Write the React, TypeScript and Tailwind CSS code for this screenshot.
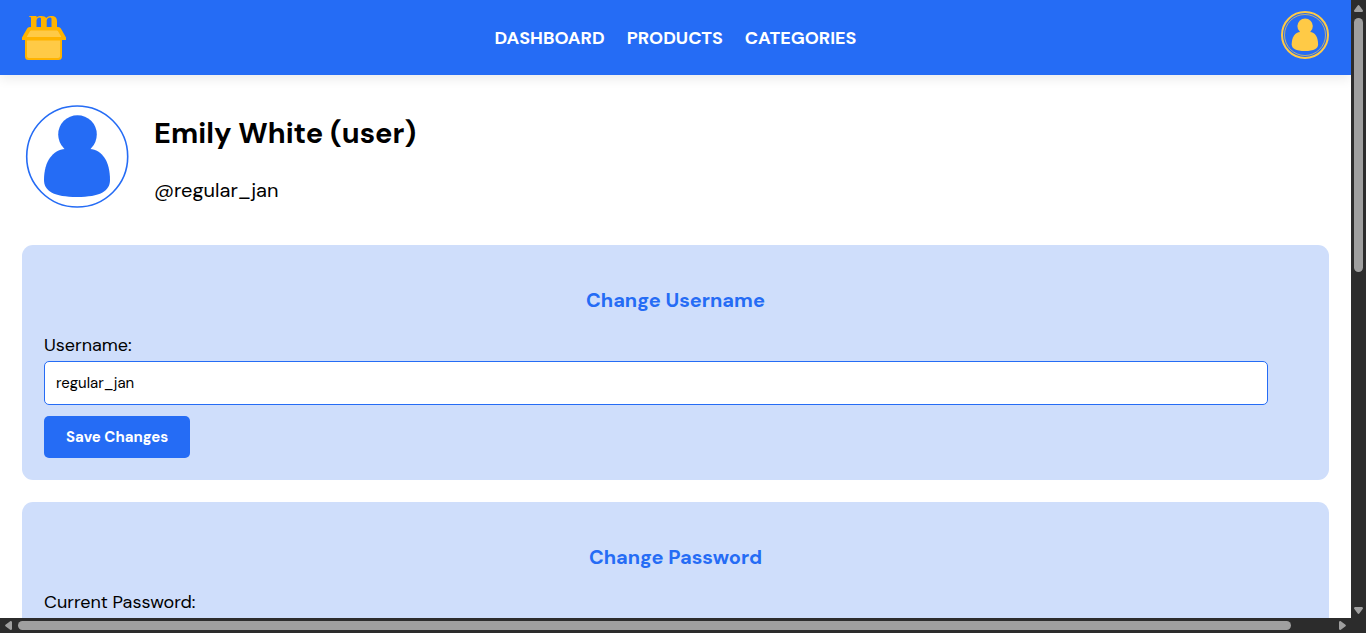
import type { ReactNode } from "react";

const navItems = ["DASHBOARD", "PRODUCTS", "CATEGORIES"];

function Logo() {
  return (
    <svg viewBox="0 0 44 45" className="h-[45px] w-11" aria-hidden="true">
      <g fill="#ffb300">
        <path d="M7 1h7.500v1.500C15.800 1.400 17.300 1 19.300 1c2.600 0 4.300.7 5 2C25.600 1.600 27.300 1 29.600 1 33 1 35 2.900 35 6.200V13h-5.500V4c0-1-.5-1.500-1.500-1.500-1.600 0-3 1.200-3.300 3V13H19V4c0-1-.4-1.500-1.400-1.500-1.500 0-2.800 1.200-3.100 3V13H9V3.200C9 2.200 8.300 1.800 7 1.800z" />
        <path d="M8 12h28c1.600 0 2.500.8 3.300 2.200L44 22.500V25h-4v16.500c0 2.400-1.300 3.500-3.500 3.500h-30C4.300 45 3 43.900 3 41.500V25H0v-2.500l4.700-8.300C5.500 12.800 6.400 12 8 12z" />
      </g>
      <path fill="#ffca46" d="M10 15.500h24c1.200 0 1.900.4 2.500 1.400l2.800 5H4.700l2.800-5c.6-1 1.300-1.400 2.500-1.400zM5 25.500h33V41c0 1.300-.7 2-2 2H7c-1.300 0-2-.7-2-2z" />
    </svg>
  );
}

function Person() {
  return (
    <>
      <circle cx="55.500" cy="33.500" r="19.300" />
      <path d="M43 48h25c12 1 20 12 20 31 0 11-10 17-33 17s-33-6-33-17c0-19 9-30 21-31z" />
    </>
  );
}

function Card({ title, children }: { title: string; children: ReactNode }) {
  return (
    <section className="rounded-[11px] bg-[#cfdefb] p-[22px]">
      <h2 className="mt-[18px] mb-[17px] text-center text-xl leading-[30px] font-bold text-[#256cf5]">{title}</h2>
      <form className="flex flex-col items-start" onSubmit={(e) => e.preventDefault()}>
        {children}
      </form>
    </section>
  );
}

const labelClass = "text-lg leading-[26px]";
const inputClass =
  "mt-[3px] mb-[11px] box-content h-[42px] w-[95%] rounded-[5px] border border-[#256cf5] bg-white px-[11px] text-[15px] outline-none";

export default function App() {
  return (
    <div className="grid h-screen grid-cols-[minmax(0,1fr)_15px] grid-rows-[minmax(0,1fr)_15px] bg-[#2c2c2c] font-['DM_Sans',Inter,sans-serif] text-black">
      <div className="overflow-hidden bg-white">
        <header className="grid h-[75px] grid-cols-[1fr_auto_1fr] items-center bg-[#256cf5] px-[22px] shadow-[0_4px_11px_rgba(0,0,0,0.08)]">
          <a href="#home" aria-label="Home" className="justify-self-start">
            <Logo />
          </a>
          <nav className="flex gap-[22px] text-lg leading-6 font-bold text-white">
            {navItems.map((item) => (
              <a key={item} href={"#" + item.toLowerCase()}>
                {item}
              </a>
            ))}
          </nav>
          <a href="#profile" aria-label="Profile" className="mb-[5px] justify-self-end">
            <svg viewBox="0 0 48 48" className="size-12" aria-hidden="true">
              <circle cx="24" cy="24" r="23" fill="none" stroke="#ffca46" strokeWidth="2" />
              <circle cx="24" cy="24" r="20.500" fill="none" stroke="#ffca46" strokeWidth="0.700" />
              <g fill="#ffca46" transform="translate(1.900 1.700) scale(0.400)">
                <Person />
              </g>
            </svg>
          </a>
        </header>
        <main className="flex flex-col gap-[22px] px-[22px] pt-[26px]">
          <div className="flex gap-[22px] pb-3">
            <svg viewBox="0 0 110 110" className="size-[110px]" aria-hidden="true">
              <circle cx="55.200" cy="55.500" r="50.500" fill="none" stroke="#256cf5" strokeWidth="1.600" />
              <g fill="#256cf5">
                <Person />
              </g>
            </svg>
            <div className="flex flex-col gap-[22px] pt-3">
              <h1 className="text-[29px] leading-10 font-bold">Emily White (user)</h1>
              <p className="text-xl leading-[30px]">@regular_jan</p>
            </div>
          </div>
          <Card title="Change Username">
            <label htmlFor="username" className={labelClass}>Username:</label>
            <input id="username" defaultValue="regular_jan" className={inputClass} />
            <button type="submit" className="h-[42px] rounded-[5px] bg-[#256cf5] px-[22px] text-[15px] font-bold text-white">
              Save Changes
            </button>
          </Card>
          <Card title="Change Password">
            <label htmlFor="current-password" className={labelClass}>Current Password:</label>
            <input id="current-password" type="password" className={inputClass} />
          </Card>
        </main>
      </div>
      <div className="flex flex-col items-center pt-[5px] pb-1" aria-hidden="true">
        <svg viewBox="0 0 9 7" className="h-[7px] w-[9px] fill-[#9f9f9f]"><path d="M3.500.8q1-1.400 2 0L9 5.500Q9 7 8 7H1Q0 7 0 5.500z" /></svg>
        <div className="mt-1.5 mb-1.5 min-h-0 w-full grow px-[3px]">
          <div className="h-[43.5%] rounded-full bg-[#9f9f9f]" />
        </div>
        <svg viewBox="0 0 9 7" className="h-[7px] w-[9px] fill-[#9f9f9f]"><path d="M3.500 6.200q1 1.400 2 0L9 1.500Q9 0 8 0H1Q0 0 0 1.500z" /></svg>
      </div>
      <div className="flex items-center px-[5px]" aria-hidden="true">
        <svg viewBox="0 0 7 9" className="h-[9px] w-[7px] fill-[#9f9f9f]"><path d="M.8 3.500q-1.400 1 0 2L5.500 9Q7 9 7 8V1Q7 0 5.500 0z" /></svg>
        <div className="mx-1.5 grow">
          <div className="h-[9px] w-[96.8%] rounded-full bg-[#9f9f9f]" />
        </div>
        <svg viewBox="0 0 7 9" className="h-[9px] w-[7px] fill-[#9f9f9f]"><path d="M6.200 3.500q1.400 1 0 2L1.500 9Q0 9 0 8V1Q0 0 1.500 0z" /></svg>
      </div>
    </div>
  );
}
